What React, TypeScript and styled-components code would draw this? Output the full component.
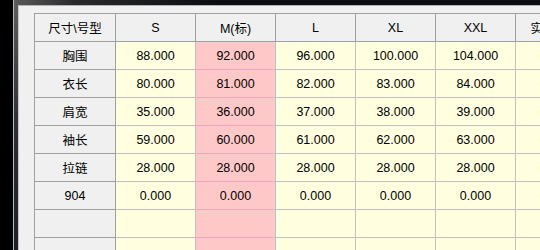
import React from "react";
import styled, { createGlobalStyle } from "styled-components";

const Global = createGlobalStyle`
  html, body { margin: 0; padding: 0; background: #000; overflow: hidden; }
  * { box-sizing: border-box; }
`;

const Screen = styled.div`
  width: 540px;
  height: 250px;
  background: #000;
  padding-left: 13px;
  display: flex;
`;

const WindowFrame = styled.div`
  flex: 1;
  display: flex;
  border-left: 1px solid #b8bcc0;
  padding: 5px 0 0 4px;
  background:
    linear-gradient(to right, #5a5a5a 0px, #2a2a2c 60px, #0c0d12 200px) top / 100% 5px no-repeat,
    linear-gradient(to bottom, #5c5f62 0%, #2a3034 50%, #1a2024 100%);
`;

const Panel = styled.div`
  flex: 1;
  background: #f0f0f0;
  border-left: 1px solid #c4c6c8;
  border-top: 1px solid #b0b4b8;
  padding: 7px 0 0 15px;
  overflow: hidden;
`;

const Grid = styled.div`
  display: grid;
  grid-template-columns: 81px repeat(6, 80px);
  grid-auto-rows: 28px;
  border-left: 1px solid #a0a0a0;
  border-top: 1px solid #a0a0a0;
  width: max-content;
  font-family: "Liberation Sans", "Noto Sans CJK SC", sans-serif;
  font-size: 12.5px;
  color: #000;
`;

type Kind = "head" | "side" | "data" | "mark";

const bgMap: Record<Kind, string> = {
  head: "#f0f0f0",
  side: "#f0f0f0",
  data: "#ffffe0",
  mark: "#ffc8c8",
};

const Cell = styled.div<{ $kind: Kind }>`
  display: flex;
  align-items: center;
  justify-content: center;
  white-space: nowrap;
  overflow: hidden;
  background: ${(p) => bgMap[p.$kind]};
  border-right: 1px solid ${(p) => (p.$kind === "head" || p.$kind === "side" ? "#a0a0a0" : "#c0c0c0")};
  border-bottom: 1px solid ${(p) => (p.$kind === "head" || p.$kind === "side" ? "#a0a0a0" : "#c0c0c0")};
`;

const headers = ["尺寸\\号型", "S", "M(标)", "L", "XL", "XXL", "实测尺寸"];

const rows: { name: string; values: string[] }[] = [
  { name: "胸围", values: ["88.000", "92.000", "96.000", "100.000", "104.000", "0.000"] },
  { name: "衣长", values: ["80.000", "81.000", "82.000", "83.000", "84.000", "0.000"] },
  { name: "肩宽", values: ["35.000", "36.000", "37.000", "38.000", "39.000", "0.000"] },
  { name: "袖长", values: ["59.000", "60.000", "61.000", "62.000", "63.000", "0.000"] },
  { name: "拉链", values: ["28.000", "28.000", "28.000", "28.000", "28.000", "0.000"] },
  { name: "904", values: ["0.000", "0.000", "0.000", "0.000", "0.000", "0.000"] },
  { name: "", values: ["", "", "", "", "", ""] },
  { name: "", values: ["", "", "", "", "", ""] },
];

export default function App() {
  return (
    <>
      <Global />
      <Screen>
        <WindowFrame>
          <Panel>
            <Grid>
              {headers.map((h, i) => (
                <Cell key={"h" + i} $kind="head">
                  {h}
                </Cell>
              ))}
              {rows.map((r, ri) => (
                <React.Fragment key={ri}>
                  <Cell $kind="side">{r.name}</Cell>
                  {r.values.map((v, ci) => (
                    <Cell key={ci} $kind={ci === 1 ? "mark" : "data"}>
                      {v}
                    </Cell>
                  ))}
                </React.Fragment>
              ))}
            </Grid>
          </Panel>
        </WindowFrame>
      </Screen>
    </>
  );
}
